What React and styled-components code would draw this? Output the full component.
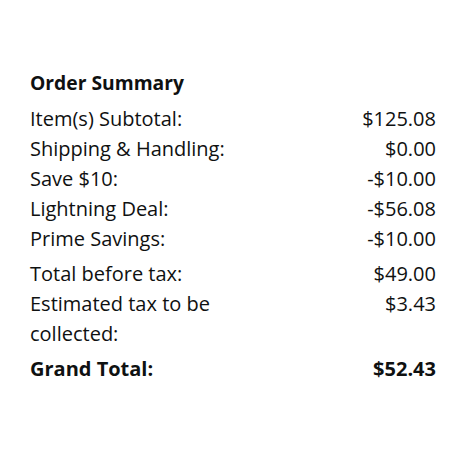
import React from "react";
import styled, { createGlobalStyle } from "styled-components";

const Global = createGlobalStyle`
  html, body { margin: 0; padding: 0; background: #fff; }
  body { font-family: "Open Sans", "Noto Sans", sans-serif; color: #0f1111; }
`;

const Panel = styled.div`
  width: 450px;
  height: 450px;
  box-sizing: border-box;
  padding: 68px 14px 0 30px;
  display: flex;
  flex-direction: column;
`;

const Title = styled.h2`
  margin: 0 0 6px;
  font-size: 19.3px;
  font-weight: 700;
  line-height: 30px;
`;

const Group = styled.div`
  display: flex;
  flex-direction: column;
  margin-top: ${(p) => p.$gap || 0}px;
`;

const Row = styled.div`
  display: grid;
  grid-template-columns: 1fr auto;
  column-gap: 20px;
  font-size: 20px;
  line-height: 30px;
  font-weight: ${(p) => (p.$bold ? 700 : 400)};
`;

const Label = styled.span`
  max-width: ${(p) => (p.$narrow ? "200px" : "none")};
`;

const Value = styled.span`
  text-align: right;
`;

const groups = [
  [
    ["Item(s) Subtotal:", "$125.08"],
    ["Shipping & Handling:", "$0.00"],
    ["Save $10:", "-$10.00"],
    ["Lightning Deal:", "-$56.08"],
    ["Prime Savings:", "-$10.00"],
  ],
  [
    ["Total before tax:", "$49.00"],
    ["Estimated tax to be collected:", "$3.43", true],
  ],
];

export default function App() {
  return (
    <>
      <Global />
      <Panel>
        <Title>Order Summary</Title>
        {groups.map((g, i) => (
          <Group key={i} $gap={i ? 5 : 0}>
            {g.map(([l, v, narrow]) => (
              <Row key={l}>
                <Label $narrow={narrow}>{l}</Label>
                <Value>{v}</Value>
              </Row>
            ))}
          </Group>
        ))}
        <Group $gap={5}>
          <Row $bold>
            <Label>Grand Total:</Label>
            <Value>$52.43</Value>
          </Row>
        </Group>
      </Panel>
    </>
  );
}
